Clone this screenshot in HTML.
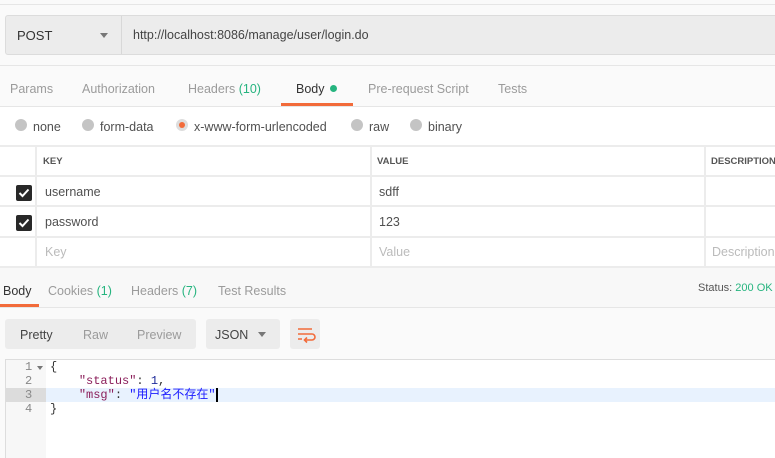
<!DOCTYPE html><html><head><meta charset="utf-8"><style>
*{margin:0;padding:0;box-sizing:border-box}
body{width:775px;height:458px;overflow:hidden;background:#fafafa;font-family:"Liberation Sans","Noto Sans CJK SC",sans-serif;font-size:12.5px;color:#505050;position:relative}
.a{position:absolute;white-space:nowrap}
.g{color:#9b9b9b}.gr{color:#26b47f}
.rad{position:absolute;width:12px;height:12px;border-radius:50%;background:#c4c4c4;top:119px}
.cb{position:absolute;left:16px;width:16px;height:16px;background:#282828;border-radius:2px}
.cb svg{position:absolute;left:2px;top:3px}
.mono{font-family:"Liberation Mono","Noto Sans CJK SC",monospace;font-size:12px}
</style></head><body>
<div class="a" style="left:0;top:4px;width:775px;height:1px;background:#e6e6e6"></div>
<div class="a" style="left:5px;top:15px;width:775px;height:40px;background:#ececec;border:1px solid #dcdcdc;border-radius:3px"></div>
<div class="a" style="left:121px;top:16px;width:1px;height:38px;background:#d8d8d8"></div>
<div class="a" style="left:17px;top:28px;color:#333;font-size:13px">POST</div>
<div class="a" style="left:100px;top:33px;border-left:4px solid transparent;border-right:4px solid transparent;border-top:5px solid #777"></div>
<div class="a" style="left:133px;top:28px;color:#444;font-size:12.5px">http://localhost:8086/manage/user/login.do</div>
<div class="a" style="left:0;top:65px;width:775px;height:1px;background:#e6e6e6"></div>
<div class="a g" style="left:10px;top:82px">Params</div>
<div class="a g" style="left:82px;top:82px">Authorization</div>
<div class="a g" style="left:188px;top:82px">Headers <span class="gr">(10)</span></div>
<div class="a" style="left:296px;top:82px;color:#333">Body</div>
<div class="a" style="left:330px;top:85px;width:7px;height:7px;border-radius:50%;background:#26b47f"></div>
<div class="a g" style="left:368px;top:82px">Pre-request Script</div>
<div class="a g" style="left:498px;top:82px">Tests</div>
<div class="a" style="left:281px;top:103px;width:72px;height:3px;background:#f26b3a"></div>
<div class="a" style="left:0;top:106px;width:775px;height:40px;background:#fff;border-top:1px solid #e6e6e6"></div>
<div class="rad" style="left:15px"></div><div class="a" style="left:33px;top:120px">none</div>
<div class="rad" style="left:82px"></div><div class="a" style="left:100px;top:120px">form-data</div>
<div class="rad" style="left:176px;background:#ddd"><div style="position:absolute;left:3px;top:3px;width:6px;height:6px;border-radius:50%;background:#f26b3a"></div></div><div class="a" style="left:194px;top:120px">x-www-form-urlencoded</div>
<div class="rad" style="left:351px"></div><div class="a" style="left:369px;top:120px">raw</div>
<div class="rad" style="left:410px"></div><div class="a" style="left:428px;top:120px">binary</div>
<div class="a" style="left:0;top:145px;width:775px;height:123px;background:#fff"></div>
<div class="a" style="left:0;top:145px;width:775px;height:2px;background:#ececec"></div>
<div class="a" style="left:0;top:175px;width:775px;height:2px;background:#ececec"></div>
<div class="a" style="left:0;top:205px;width:775px;height:2px;background:#ececec"></div>
<div class="a" style="left:0;top:236px;width:775px;height:2px;background:#ececec"></div>
<div class="a" style="left:0;top:266px;width:775px;height:2px;background:#ececec"></div>
<div class="a" style="left:35px;top:145px;width:2px;height:123px;background:#ececec"></div>
<div class="a" style="left:370px;top:145px;width:2px;height:123px;background:#ececec"></div>
<div class="a" style="left:704px;top:145px;width:2px;height:123px;background:#ececec"></div>
<div class="a" style="left:43px;top:156px;font-size:9.5px;font-weight:bold;color:#555">KEY</div>
<div class="a" style="left:377px;top:156px;font-size:9.5px;font-weight:bold;color:#555">VALUE</div>
<div class="a" style="left:711px;top:156px;font-size:9.5px;font-weight:bold;color:#555">DESCRIPTION</div>
<div class="cb" style="top:185px"><svg width="12" height="10"><path d="M1.5 5l3 3 6-6.5" stroke="#fff" stroke-width="2" fill="none"/></svg></div>
<div class="cb" style="top:215px"><svg width="12" height="10"><path d="M1.5 5l3 3 6-6.5" stroke="#fff" stroke-width="2" fill="none"/></svg></div>
<div class="a" style="left:45px;top:185px">username</div>
<div class="a" style="left:379px;top:185px">sdff</div>
<div class="a" style="left:45px;top:215px">password</div>
<div class="a" style="left:379px;top:215px">123</div>
<div class="a" style="left:45px;top:245px;color:#bbb">Key</div>
<div class="a" style="left:379px;top:245px;color:#bbb">Value</div>
<div class="a" style="left:712px;top:245px;color:#bbb">Description</div>
<div class="a" style="left:0;top:268px;width:775px;height:40px;background:#f8f8f8;border-bottom:1px solid #e6e6e6"></div>
<div class="a" style="left:3px;top:284px;color:#333">Body</div>
<div class="a g" style="left:48px;top:284px">Cookies <span class="gr">(1)</span></div>
<div class="a g" style="left:131px;top:284px">Headers <span class="gr">(7)</span></div>
<div class="a g" style="left:218px;top:284px">Test Results</div>
<div class="a" style="left:0;top:304px;width:39px;height:3px;background:#f26b3a"></div>
<div class="a" style="left:698px;top:282px;font-size:11px;color:#555">Status: <span class="gr">200 OK</span></div>
<div class="a" style="left:5px;top:319px;width:191px;height:30px;background:#ececec;border-radius:3px"></div>
<div class="a" style="left:20px;top:328px;color:#444">Pretty</div>
<div class="a g" style="left:83px;top:328px">Raw</div>
<div class="a g" style="left:137px;top:328px">Preview</div>
<div class="a" style="left:206px;top:319px;width:74px;height:30px;background:#ececec;border-radius:3px"></div>
<div class="a" style="left:215px;top:328px;color:#444">JSON</div>
<div class="a" style="left:258px;top:332px;border-left:4px solid transparent;border-right:4px solid transparent;border-top:5px solid #777"></div>
<div class="a" style="left:290px;top:319px;width:30px;height:30px;background:#ececec;border-radius:3px"><svg width="30" height="30"><path d="M8 10h14M8 15h14a3 3 0 0 1 0 6h-7M8 20h4" stroke="#f26b3a" stroke-width="1.6" fill="none"/><path d="M17 18.5l-2.5 2.5 2.5 2.5" stroke="#f26b3a" stroke-width="1.6" fill="none"/></svg></div>
<div class="a" style="left:5px;top:359px;width:770px;height:99px;background:#fff;border-top:1px solid #ddd;border-left:1px solid #ddd"></div>
<div class="a" style="left:6px;top:360px;width:40px;height:98px;background:#f7f7f7"></div>
<div class="a" style="left:6px;top:388px;width:40px;height:14px;background:#dcdcdc"></div>
<div class="a" style="left:46px;top:388px;width:729px;height:14px;background:#e8f2fe"></div>
<div class="a mono" style="left:25px;top:360px;color:#888;line-height:14px">1<br>2<br>3<br>4</div>
<div class="a" style="left:37px;top:366px;border-left:3px solid transparent;border-right:3px solid transparent;border-top:4px solid #777"></div>
<div class="a mono" style="left:50px;top:360px;line-height:14px;color:#333">{<br>&nbsp;&nbsp;&nbsp;&nbsp;<span style="color:#8b1e5a">"status"</span>: <span style="color:#1e2a9a">1</span>,<br>&nbsp;&nbsp;&nbsp;&nbsp;<span style="color:#8b1e5a">"msg"</span>: <span style="color:#1a1aff">"用户名不存在"</span><span style="border-left:2px solid #000"></span><br>}</div>
</body></html>
